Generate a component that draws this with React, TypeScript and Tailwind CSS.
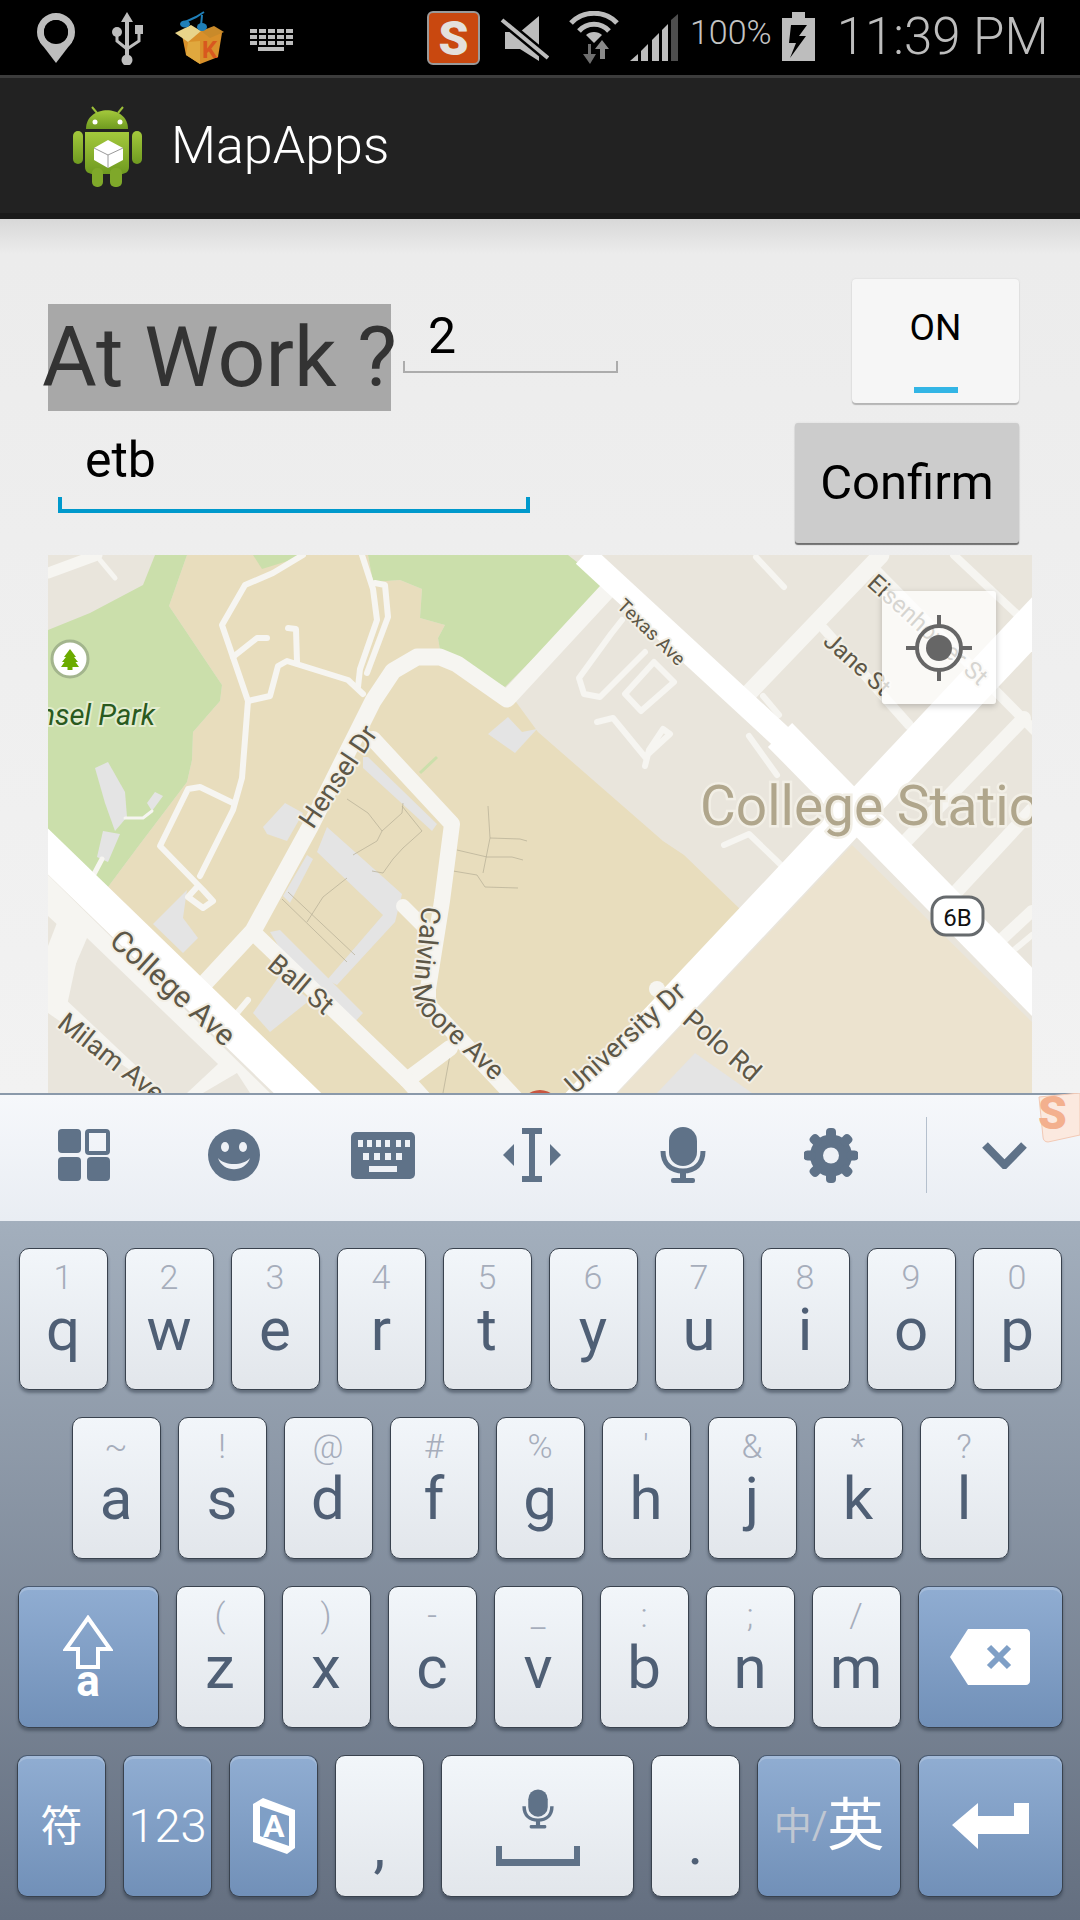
import type { ReactNode } from "react";

const ROAD = "#f6f5f1";
const TAN = "#e8ddbd";
const GREEN = "#cbdfab";
const BLOCK = "#e9e5dc";
const BUILDING = "#e4e4e4";
const ICON = "#5f7288";

type Label = { t: string; x: number; y: number; a: number; s: number };

// labels on the map: baseline start (x, y), angle, size
const LABELS: Label[] = [
  { t: "Texas Ave", x: 616, y: 607, a: 44, s: 19 },
  { t: "Eisenhower St", x: 866, y: 585, a: 42, s: 24 },
  { t: "Jane St", x: 822, y: 643, a: 42, s: 24 },
  { t: "University Dr", x: 575, y: 1095, a: -42, s: 27 },
  { t: "Polo Rd", x: 681, y: 1022, a: 41, s: 27 },
  { t: "Hensel Dr", x: 313, y: 830, a: -56, s: 27 },
  { t: "College Ave", x: 108, y: 943, a: 42, s: 30 },
  { t: "Milam Ave", x: 56, y: 1026, a: 38, s: 27 },
  { t: "Ball St", x: 266, y: 967, a: 40, s: 27 },
];

const THIN = [
  "M347 799L368 813L382 831L377 841L353 855",
  "M403 803L402 813L382 831",
  "M402 806L422 831L403 848L393 859L383 873L372 871",
  "M347 878L323 897L307 922",
  "M288 892L355 955",
  "M282 899L347 962",
  "M488 806L490 838L483 873",
  "M490 838L520 839L527 841",
  "M457 850L487 857L512 857L523 860",
  "M453 871L477 875L485 887L518 888",
  "M450 1055L443 1093",
];

const DRIVES = [
  "M303 555L273 573L245 585L222 625L248 701L242 778L233 810L200 876",
  "M233 803L200 787L188 789L160 846L203 890L213 901L203 908L188 897L197 887",
  "M248 701L270 696L278 666L287 661L348 680L363 694",
  "M233 657L257 638L267 638",
  "M297 662L296 629L288 628",
  "M362 555L373 589L377 620L360 669L358 687",
  "M375 583L385 585L388 617L367 673",
  "M622 620L611 634L579 678L584 694L600 697L645 652",
  "M654 662L674 682L641 711L625 694Z",
  "M597 722L613 718L645 757L670 734L663 729L649 750L645 766",
  "M756 557L784 587",
  "M763 696L779 715",
  "M749 736L777 775",
  "M724 845L749 834L782 866",
  "M1002 960L1032 935",
];

function MapView() {
  return (
    <svg viewBox="48 555 984 538" className="block h-[538px] w-[984px]">
      <rect x="48" y="555" width="984" height="538" fill={BLOCK} />
      <path d="M48 875L270 1093H48Z" fill={ROAD} />
      <path d="M87 938L218 1064L187 1093H165L62 996Z" fill={BLOCK} />
      <path d="M48 1013L163 1093H48Z" fill={BLOCK} />
      <path d="M48 900L60 915L48 946Z" fill={BLOCK} />
      <path d="M237 1073L250 1093H203Z" fill={BLOCK} />
      <path d="M852 845L1032 1022V1093H618Z" fill="#ece3cf" />
      <path d="M695 1053L657 1093H752Z" fill={BUILDING} />
      <path
        d="M187 555L368 555L373 582L400 580L422 589L420 618L445 625L438 638L440 650L505 687L538 732L663 841L684 855L741 910L591 1093L300 1093L108 887L137 848L187 782L192 760L193 732L220 701L222 685L169 606Z"
        fill={TAN}
      />
      <path
        d="M155 555L187 555L169 606L222 685L220 701L193 732L192 760L187 782L137 848L108 887L48 830L48 630L90 613L143 585Z"
        fill={GREEN}
      />
      <path d="M253 555L262 569L307 555Z" fill={GREEN} />
      <path d="M368 555L373 582L400 580L422 589L420 618L445 625L438 638L440 650L505 687L606 585L568 555Z" fill={GREEN} />

      <g fill={BUILDING}>
        <path d="M95 768L108 762L125 792L127 817L115 831L105 803Z" />
        <path d="M147 803L155 792L163 796L152 811Z" />
        <path d="M103 831L120 834L108 862L97 857Z" />
        <path d="M153 924L187 890L183 918L198 938L183 953Z" />
        <path d="M263 827L285 803L303 813L287 841L267 834Z" />
        <path d="M327 827L402 894L395 922L337 985L327 980L383 915L317 852Z" />
        <path d="M307 855L313 859L290 903L283 896Z" />
        <path d="M270 932L280 930L363 1013L353 1024L290 965Z" />
        <path d="M253 1013L270 1032L310 1000L280 975Z" />
        <path d="M363 757L368 757L437 824L432 831L363 768Z" />
        <path d="M488 734L508 717L522 732L537 729L515 753Z" />
      </g>
      <path d="M420 773L437 757" stroke={GREEN} strokeWidth="3" fill="none" />

      <g fill="none" stroke="#b5ad95" strokeWidth="0.7">
        {THIN.map((d) => (
          <path key={d} d={d} />
        ))}
      </g>

      <g fill="none" stroke={ROAD} strokeLinejoin="round" strokeLinecap="round">
        <g strokeWidth="6">
          {DRIVES.map((d) => (
            <path key={d} d={d} />
          ))}
        </g>
        <path d="M48 573L97 555" strokeWidth="11" />
        <path d="M100 560L115 578" strokeWidth="5" />
        <path d="M93 876L102 859" strokeWidth="5" />
        <path d="M118 755H0" strokeWidth="0" />
        <path d="M125 818H143L152 811" strokeWidth="3" />
        <path d="M203 985L253 931L310 827L373 701L393 671L417 657L440 657L457 664L507 699L606 592" strokeWidth="17" />
        <path d="M373 739L452 824L442 901L428 989L428 1005L517 1100" strokeWidth="16" />
        <path d="M257 936L407 1080L450 1048" strokeWidth="16" />
        <path d="M407 1080L425 1100" strokeWidth="16" />
        <path d="M403 906L428 931" strokeWidth="14" />
        <path d="M221 1032L248 1000" strokeWidth="6" />
        <path d="M745 697L881 555" strokeWidth="17" />
        <path d="M824 629L909 725" strokeWidth="10" />
        <path d="M877 571L1040 736" strokeWidth="10" />
        <path d="M954 555L1020 617" strokeWidth="8" />
        <path d="M902 845L1024 718" strokeWidth="14" />
        <path d="M956 892L1032 810" strokeWidth="14" />
        <path d="M1002 939L1032 911" strokeWidth="12" />
        <path d="M48 905L75 930L60 1000" strokeWidth="16" />
      </g>

      <g fill="none" stroke="#ffffff">
        <path d="M30 834L315 1110" strokeWidth="33" />
        <path d="M575 1110L1050 605" strokeWidth="37" />
        <path d="M584 555L790 745" strokeWidth="24" />
        <path d="M780 735L1050 1010" strokeWidth="34" />
      </g>
      <circle cx="657" cy="989" r="8" fill={ROAD} />

      <circle cx="540" cy="1110" r="20" fill="#c8553f" />

      <text x="700" y="825" fontSize="55" fill="#b0a68c" stroke="#f2efe6" strokeWidth="5" paintOrder="stroke">
        College Station
      </text>

      <g fill="#5d5747" stroke="#f2efe6" strokeWidth="4" paintOrder="stroke" strokeLinejoin="round">
        {LABELS.map((l) => (
          <text key={l.t} x={l.x} y={l.y} fontSize={l.s} transform={`rotate(${l.a} ${l.x} ${l.y})`}>
            {l.t}
          </text>
        ))}
        <path id="calvin" d="M422 906L414 985Q412 1005 428 1020L530 1115" fill="none" stroke="none" />
        <text fontSize="27">
          <textPath href="#calvin">Calvin Moore Ave</textPath>
        </text>
      </g>

      <text
        x="155"
        y="725"
        fontSize="29"
        fontStyle="italic"
        textAnchor="end"
        fill="#2a5a1e"
        stroke="#e3edcf"
        strokeWidth="4"
        paintOrder="stroke"
      >
        Hensel Park
      </text>
      <circle cx="70" cy="659" r="18" fill="#ffffff" stroke="#a3b58d" strokeWidth="3" />
      <path d="M70 649L76 657H74L78 662H75.500L79 667H72.500V670H67.500V667H61L64.500 662H62L66 657H64Z" fill="#6bab00" />

      <rect x="932" y="897" width="51" height="38" rx="14" fill="#ffffff" stroke="#666a6d" strokeWidth="3" />
      <text x="957.500" y="926" fontSize="24" textAnchor="middle" fill="#111111">
        6B
      </text>
    </svg>
  );
}

function Hint({ children }: { children: ReactNode }) {
  return (
    <span className="block h-[40px] text-[34px] leading-[40px] font-light text-[#a6adbb]">{children}</span>
  );
}

function Key({ hint, letter }: { hint: string; letter: string }) {
  return (
    <div className="flex h-[142px] w-[89px] flex-col items-center rounded-[10px] border border-[#39424e] bg-gradient-to-b from-[#f2f6fa] to-[#e2e6eb] pt-[8px] shadow-[0_3px_3px_rgba(40,50,65,0.45)]">
      <Hint>{hint}</Hint>
      <span className="block text-[60px] leading-[66px] text-[#4f5f75]">{letter}</span>
    </div>
  );
}

function LightKey({ w, children }: { w: string; children: ReactNode }) {
  return (
    <div
      className={`${w} flex h-[142px] flex-col items-center justify-center rounded-[10px] border border-[#39424e] bg-gradient-to-b from-[#f2f6fa] to-[#e2e6eb] text-[#4f5f75] shadow-[0_3px_3px_rgba(40,50,65,0.45)]`}
    >
      {children}
    </div>
  );
}

function BlueKey({ w, children }: { w: string; children: ReactNode }) {
  return (
    <div
      className={`${w} flex h-[142px] items-center justify-center rounded-[10px] border border-[#39424e] border-t-[#4a5a70] bg-gradient-to-b from-[#90add2] to-[#7190b8] text-white shadow-[inset_0_3px_0_rgba(255,255,255,0.18),0_3px_3px_rgba(40,50,65,0.45)]`}
    >
      {children}
    </div>
  );
}

function GridIcon() {
  return (
    <svg width="52" height="52" viewBox="0 0 52 52" fill={ICON} className="ml-[58px]">
      <rect x="0" y="0" width="23" height="24" rx="4" />
      <rect x="29" y="2" width="21" height="22" rx="2" fill="none" stroke={ICON} strokeWidth="4" />
      <rect x="0" y="28" width="23" height="24" rx="4" />
      <rect x="29" y="28" width="23" height="24" rx="4" />
    </svg>
  );
}

function SmileIcon() {
  return (
    <svg width="52" height="52" viewBox="0 0 52 52" className="ml-[98px]">
      <circle cx="26" cy="26" r="26" fill={ICON} />
      <ellipse cx="17" cy="18" rx="4" ry="5" fill="#eef1f6" />
      <ellipse cx="35" cy="18" rx="4" ry="5" fill="#eef1f6" />
      <path d="M10 29C15 44 37 44 42 29C35 37 17 37 10 29Z" fill="#eef1f6" />
    </svg>
  );
}

function KeyboardIcon() {
  return (
    <svg width="64" height="47" viewBox="0 0 64 47" className="ml-[91px]">
      <rect width="64" height="47" rx="5" fill={ICON} />
      <g fill="#eef1f6">
        {[7, 16, 25, 34, 45, 54].map((x) => (
          <rect key={x} x={x} y="8" width="5" height="7" />
        ))}
        {[12, 23, 34, 45].map((x) => (
          <rect key={x} x={x} y="21" width="6" height="7" />
        ))}
        <rect x="18" y="34" width="28" height="6" />
      </g>
    </svg>
  );
}

function CursorIcon() {
  return (
    <svg width="58" height="54" viewBox="0 0 58 54" fill={ICON} className="ml-[88px]">
      <rect x="19" y="0" width="20" height="6" />
      <rect x="26" y="0" width="6" height="54" />
      <rect x="19" y="48" width="20" height="6" />
      <path d="M11 16V38L0 27Z" />
      <path d="M47 16V38L58 27Z" />
    </svg>
  );
}

function MicIcon({ w, h, c }: { w: number; h: number; c: string }) {
  return (
    <svg width={w} height={h} viewBox="0 0 46 56" fill={c}>
      <rect x="9" y="0" width="28" height="39" rx="14" />
      <path d="M3 24C3 37 11 44 23 44C35 44 43 37 43 24" fill="none" stroke={c} strokeWidth="5" />
      <rect x="20" y="43" width="6" height="9" />
      <rect x="11" y="51" width="24" height="5" rx="2" />
    </svg>
  );
}

function GearIcon() {
  return (
    <svg width="54" height="55" viewBox="0 0 54 55" className="ml-[98px]">
      <g fill={ICON}>
        <circle cx="27" cy="27.500" r="21" />
        {[0, 45, 90, 135, 180, 225, 270, 315].map((a) => (
          <rect key={a} x="22" y="0" width="10" height="12" rx="4" transform={`rotate(${a} 27 27.500)`} />
        ))}
      </g>
      <circle cx="27" cy="27.500" r="8" fill="#eef1f6" />
    </svg>
  );
}

function StatusIcons() {
  return (
    <div className="flex h-[75px] items-start bg-black pt-[11px] text-[#bdbdbd]">
      <svg width="38" height="54" viewBox="0 0 38 54" className="ml-[37px]">
        <circle cx="19" cy="21" r="15.500" fill="none" stroke="#bdbdbd" strokeWidth="7" />
        <path d="M3 31L19 52L35 31Z" fill="#bdbdbd" />
        <circle cx="19" cy="21" r="12" fill="#000000" />
      </svg>
      <svg width="33" height="54" viewBox="0 0 33 54" className="ml-[37px]" fill="#bdbdbd">
        <path d="M15 1L21 11H9Z" />
        <rect x="13" y="9" width="4" height="36" />
        <circle cx="15" cy="49" r="5.500" />
        <circle cx="5" cy="21" r="5" />
        <rect x="23" y="14" width="8" height="9" />
        <path d="M5 22V30L15 38M27 22V30L15 38" fill="none" stroke="#bdbdbd" strokeWidth="3" />
      </svg>
      <svg width="52" height="54" viewBox="0 0 52 54" className="ml-[29px]">
        <path d="M8 24L27 18L48 22L44 46L26 53L12 44Z" fill="#d9902a" />
        <path d="M1 22L17 14L27 20L14 31Z" fill="#e8d48a" />
        <path d="M27 20L40 15L50 21L36 27Z" fill="#c98a2a" />
        <path d="M14 31L12 44L26 53V30Z" fill="#e0a83e" />
        <path d="M9 12L22 6L30 1" fill="none" stroke="#1f7fb8" strokeWidth="2" />
        <ellipse cx="11" cy="13" rx="5" ry="3.500" fill="#1f7fb8" />
        <ellipse cx="28" cy="16" rx="5" ry="4" fill="#1f7fb8" />
        <path d="M27 15L28 4" stroke="#1f7fb8" strokeWidth="2" />
        <text x="28" y="47" fontSize="24" fontWeight="700" fill="#d8581e">
          K
        </text>
      </svg>
      <svg width="43" height="54" viewBox="0 0 43 54" className="ml-[24px]" fill="#bdbdbd">
        {[0, 9, 18, 27, 36].map((x) => (
          <rect key={x} x={x} y="18" width="7" height="4" />
        ))}
        {[0, 9, 18, 27, 36].map((x) => (
          <rect key={x} x={x} y="24" width="7" height="4" />
        ))}
        {[0, 9, 18, 27, 36].map((x) => (
          <rect key={x} x={x} y="30" width="7" height="4" />
        ))}
        <rect x="8" y="36" width="26" height="4" />
      </svg>
      <svg width="53" height="54" viewBox="0 0 53 54" className="ml-[134px]">
        <rect x="1" y="1" width="51" height="52" rx="5" fill="#c9480f" stroke="#9a9a9a" strokeWidth="2" />
        <text x="26.500" y="44" fontSize="48" fontWeight="900" textAnchor="middle" fill="#e4e0dc">
          S
        </text>
      </svg>
      <svg width="49" height="54" viewBox="0 0 49 54" className="ml-[20px]">
        <path d="M5 21H20L39 5V50L20 38H5Z" fill="#bdbdbd" />
        <path d="M2 9L48 47" stroke="#000000" strokeWidth="9" />
        <path d="M2 9L48 47" stroke="#bdbdbd" strokeWidth="4" />
      </svg>
      <svg width="50" height="54" viewBox="0 0 50 54" className="ml-[20px]">
        <g fill="none" stroke="#bdbdbd" strokeWidth="5">
          <path d="M2 12C14 -1 36 -1 48 12" />
          <path d="M10 20C18 11 32 11 40 20" />
        </g>
        <path d="M25 32L17 24C21 20 29 20 33 24Z" fill="#bdbdbd" />
        <path d="M22 33V43H27L21 53L14 43H19V33Z" fill="#6e6e6e" />
        <path d="M33 29L40 38H36V48H31V38H26Z" fill="#8a8a8a" />
      </svg>
      <svg width="48" height="54" viewBox="0 0 48 54" className="ml-[11px]">
        <path d="M0 50L8 43V50Z" fill="#bdbdbd" />
        <path d="M11 40L18 33V50H11Z" fill="#bdbdbd" />
        <path d="M22 29L29 22V50H22Z" fill="#bdbdbd" />
        <path d="M32 19L38 13V50H32Z" fill="#bdbdbd" />
        <path d="M41 9L48 3V50H41Z" fill="#4e4e4e" />
      </svg>
      <span className="ml-[12px] mt-[1px] text-[34px] leading-[40px] font-light text-[#c4c4c4]">100%</span>
      <svg width="33" height="54" viewBox="0 0 33 54" className="ml-[10px]">
        <rect x="10" y="1" width="13" height="7" fill="#bdbdbd" />
        <rect x="0" y="7" width="33" height="43" fill="#bdbdbd" />
        <path d="M25 14L9 14L7 32H14L8 47L24 25H17Z" fill="#000000" />
      </svg>
      <span className="ml-[22px] mt-[-4px] text-[51px] leading-[60px] font-light text-[#bdbdbd]">11:39 PM</span>
    </div>
  );
}

function AndroidLogo() {
  return (
    <svg width="100" height="100" viewBox="0 0 100 100" className="ml-[60px]">
      <defs>
        <linearGradient id="droid" x1="0" y1="0" x2="0" y2="1">
          <stop offset="0" stopColor="#a4c93c" />
          <stop offset="1" stopColor="#6f9a20" />
        </linearGradient>
      </defs>
      <path d="M32 11L37 17M63 11L58 17" stroke="#9cbf38" strokeWidth="2" />
      <path d="M26 33C26 8 68 8 68 33Z" fill="url(#droid)" />
      <circle cx="35" cy="26" r="2.500" fill="#ffffff" />
      <circle cx="60" cy="26" r="2.500" fill="#ffffff" />
      <path d="M25 36H69V71C69 76 65 78 61 78H33C29 78 25 76 25 71Z" fill="url(#droid)" />
      <rect x="13" y="35" width="10" height="33" rx="5" fill="url(#droid)" />
      <rect x="72" y="35" width="10" height="33" rx="5" fill="url(#droid)" />
      <rect x="32" y="72" width="11" height="19" rx="5" fill="#7fa82a" />
      <rect x="50" y="72" width="12" height="19" rx="5" fill="#7fa82a" />
      <path d="M48 44L63 52V64L48 72L34 64V52Z" fill="#ffffff" />
      <path d="M34 52L48 59L63 52M48 59V72" fill="none" stroke="#9a9a9a" strokeWidth="1" />
    </svg>
  );
}

export default function App() {
  return (
    <div className="flex h-[1920px] w-[1080px] flex-col overflow-hidden bg-black [font-family:Roboto,'Noto_Sans_CJK_SC',sans-serif]">
      <StatusIcons />
      <div className="h-[3px] bg-[#3c3c3c]" />
      <div className="flex h-[135px] items-center bg-[#222222]">
        <AndroidLogo />
        <span className="ml-[11px] text-[52px] font-light text-white">MapApps</span>
      </div>
      <div className="h-[6px] bg-[#1a1a1a]" />

      <main className="h-[874px] bg-gradient-to-b from-[#d8d8d8] via-[#ececec] via-[4%] to-[#f2f2f2] pl-[48px] pr-[48px] pt-[60px]">
        <div className="flex h-[124px] items-start">
          <span className="mt-[25px] flex h-[107px] w-[343px] items-center justify-center bg-[#a8a8a8] text-[84px] leading-none whitespace-nowrap text-[#333333]">
            At Work ?
          </span>
          <div className="ml-[12px] mt-[25px] w-[215px]">
            <div className="h-[57px] pl-[25px] text-[50px] leading-[65px] text-black">2</div>
            <div className="h-[12px] border-x-2 border-b-2 border-[#acacac]" />
          </div>
          <div className="ml-auto mr-[13px] flex h-[124px] w-[167px] flex-col items-center rounded-[4px] bg-[#f6f6f6] shadow-[0_2px_1px_#b5b5b5,0_0_2px_#d0d0d0]">
            <span className="mt-[24px] text-[37px] leading-[50px] text-black">ON</span>
            <span className="mt-[34px] h-[6px] w-[44px] bg-[#33b5e5]" />
          </div>
        </div>

        <div className="mt-[20px] flex h-[120px] items-start">
          <div className="ml-[10px] mt-[7px] w-[472px]">
            <div className="h-[67px] pl-[27px] text-[50px] leading-[60px] text-black">etb</div>
            <div className="h-[16px] border-x-4 border-b-4 border-[#0099cc]" />
          </div>
          <div className="ml-auto mr-[13px] flex h-[120px] w-[224px] items-center justify-center rounded-[3px] bg-[#cccccc] text-[49px] text-black shadow-[0_2px_1px_#6f6f6f,0_0_2px_#d8d8d8]">
            Confirm
          </div>
        </div>

        <div className="relative mt-[12px] h-[538px] w-[984px] overflow-hidden">
          <MapView />
          <div className="absolute left-[834px] top-[36px] flex h-[113px] w-[114px] items-center justify-center rounded-[3px] bg-white/75 shadow-[0_2px_6px_rgba(0,0,0,0.22)]">
            <svg width="66" height="66" viewBox="0 0 66 66" fill="none" stroke="#666666" strokeWidth="4">
              <circle cx="33" cy="33" r="22" />
              <circle cx="33" cy="33" r="13" fill="#666666" stroke="none" />
              <path d="M33 0V10M33 56V66M0 33H10M56 33H66" />
            </svg>
          </div>
        </div>
      </main>

      <div className="relative flex h-[128px] items-center border-t-2 border-[#8a99aa] bg-gradient-to-b from-[#f6f8fb] to-[#e9edf3] pb-[6px]">
        <GridIcon />
        <SmileIcon />
        <KeyboardIcon />
        <CursorIcon />
        <div className="ml-[99px]">
          <MicIcon w={46} h={56} c={ICON} />
        </div>
        <GearIcon />
        <div className="ml-[68px] h-[76px] w-px bg-[#b5c0cd]" />
        <svg width="47" height="28" viewBox="0 0 47 28" className="ml-[54px]">
          <path d="M4 4L23.500 24L43 4" fill="none" stroke={ICON} strokeWidth="8" />
        </svg>
        <svg width="44" height="50" viewBox="0 0 44 50" className="absolute right-0 top-[-2px]">
          <path d="M3 4L44 0V42L12 49C9 49 7 47 7 44Z" fill="#fbe9df" stroke="#f2c9b5" strokeWidth="1" />
          <text x="2" y="36" fontSize="46" fontWeight="900" fill="#f3b08e">
            S
          </text>
        </svg>
      </div>

      <div className="flex flex-1 flex-col gap-[27px] bg-gradient-to-b from-[#a3afbd] to-[#646f80] pt-[27px]">
        <div className="flex justify-center gap-[17px]">
          {[
            ["1", "q"],
            ["2", "w"],
            ["3", "e"],
            ["4", "r"],
            ["5", "t"],
            ["6", "y"],
            ["7", "u"],
            ["8", "i"],
            ["9", "o"],
            ["0", "p"],
          ].map(([h, l]) => (
            <Key key={l} hint={h} letter={l} />
          ))}
        </div>
        <div className="flex justify-center gap-[17px]">
          {[
            ["~", "a"],
            ["!", "s"],
            ["@", "d"],
            ["#", "f"],
            ["%", "g"],
            ["'", "h"],
            ["&", "j"],
            ["*", "k"],
            ["?", "l"],
          ].map(([h, l]) => (
            <Key key={l} hint={h} letter={l} />
          ))}
        </div>
        <div className="flex justify-center gap-[17px]">
          <BlueKey w="w-[141px]">
            <div className="flex flex-col items-center">
              <svg width="50" height="54" viewBox="0 0 50 54" fill="none" stroke="#ffffff" strokeWidth="4">
                <path d="M25 3L47 34H35V52H15V34H3Z" />
              </svg>
              <span className="mt-[-6px] text-[44px] leading-[36px] font-bold">a</span>
            </div>
          </BlueKey>
          {[
            ["(", "z"],
            [")", "x"],
            ["-", "c"],
            ["_", "v"],
            [":", "b"],
            [";", "n"],
            ["/", "m"],
          ].map(([h, l]) => (
            <Key key={l} hint={h} letter={l} />
          ))}
          <BlueKey w="w-[145px]">
            <svg width="80" height="56" viewBox="0 0 80 56">
              <path d="M18 0H76C78 0 80 2 80 4V52C80 54 78 56 76 56H18L0 28Z" fill="#ffffff" />
              <path d="M39 18L59 38M59 18L39 38" stroke="#7f9fc6" strokeWidth="6" />
            </svg>
          </BlueKey>
        </div>
        <div className="flex justify-center gap-[17px]">
          <BlueKey w="w-[89px]">
            <span className="text-[42px]">符</span>
          </BlueKey>
          <BlueKey w="w-[89px]">
            <span className="text-[47px] font-light">123</span>
          </BlueKey>
          <BlueKey w="w-[89px]">
            <svg width="46" height="60" viewBox="0 0 46 60" fill="none" stroke="#ffffff">
              <path d="M2 8L12 2L44 14V52L36 58L2 46Z" fill="#ffffff" stroke="none" />
              <path d="M9 10L38 20V50L9 40Z" fill="#7f9fc6" stroke="none" />
              <text x="12" y="41" fontSize="32" fontWeight="700" fill="#ffffff" stroke="none">
                A
              </text>
            </svg>
          </BlueKey>
          <LightKey w="w-[89px]">
            <span className="mt-[40px] text-[60px] leading-none">,</span>
          </LightKey>
          <LightKey w="w-[193px]">
            <MicIcon w={32} h={46} c={ICON} />
            <div className="mt-[14px] h-[20px] w-[84px] border-x-[6px] border-b-[7px] border-[#5f7288]" />
          </LightKey>
          <LightKey w="w-[89px]">
            <span className="mt-[36px] text-[60px] leading-none">.</span>
          </LightKey>
          <BlueKey w="w-[144px]">
            <span className="text-[38px] text-[#c0c7d2]">中/</span>
            <span className="text-[57px]">英</span>
          </BlueKey>
          <BlueKey w="w-[145px]">
            <svg width="77" height="46" viewBox="0 0 77 46" fill="#ffffff">
              <path d="M26 0V13H62V0H77V31H26V46L0 22Z" />
            </svg>
          </BlueKey>
        </div>
      </div>
    </div>
  );
}
